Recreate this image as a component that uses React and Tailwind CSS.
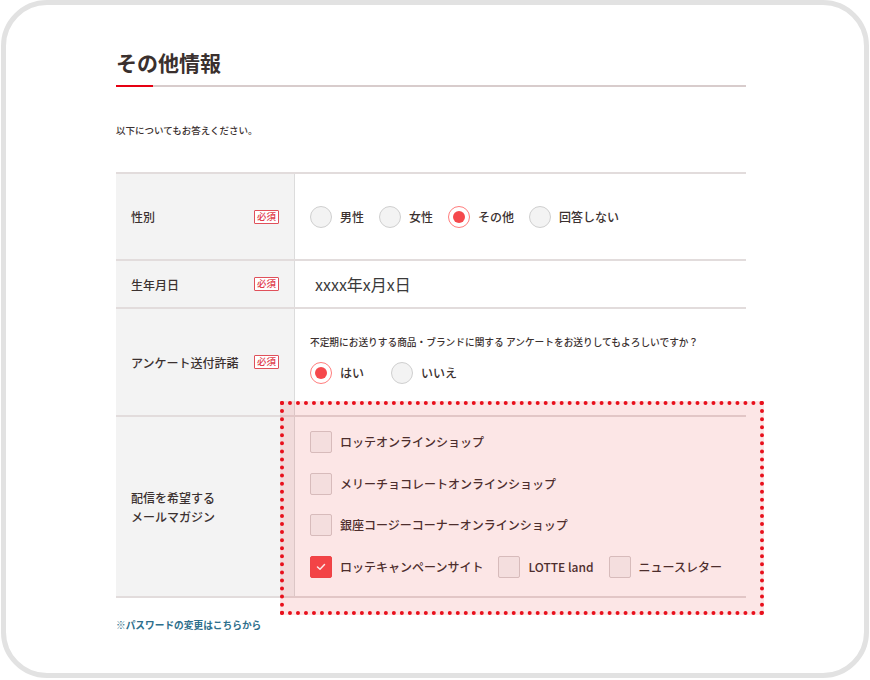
import React from 'react'

const font = { fontFamily: '"Noto Sans CJK JP", "Noto Sans", sans-serif' }

function Badge(){
  return (
    <span className="inline-flex items-center justify-center w-[25px] h-[14px] border border-[#e0505a] bg-white text-[#e03c4c] text-[9.5px] font-medium leading-none rounded-[1px]">必須</span>
  )
}

function Radio({ label, checked }){
  return (
    <div className="flex items-center gap-[8px]">
      {checked ? (
        <span className="w-[22px] h-[22px] rounded-full border border-[#ff7d7d] bg-white flex items-center justify-center">
          <span className="w-[12px] h-[12px] rounded-full bg-[#f5484c]" />
        </span>
      ) : (
        <span className="w-[22px] h-[22px] rounded-full border border-[#cfcfcf] bg-[#f3f3f3]" />
      )}
      <span className="text-[12px] font-medium text-[#3b3130] leading-none">{label}</span>
    </div>
  )
}

function Check({ label, checked }){
  return (
    <div className="flex items-center gap-[8px]">
      {checked ? (
        <span className="w-[22px] h-[22px] rounded-[2px] bg-[#f5484c] border border-[#f0484c] flex items-center justify-center">
          <svg width="10" height="8" viewBox="0 0 10 8" fill="none">
            <polyline points="1.5,4 4,6.3 8.5,1.5" stroke="#fff" strokeWidth="1.5" strokeLinecap="round" strokeLinejoin="round" />
          </svg>
        </span>
      ) : (
        <span className="w-[22px] h-[22px] rounded-[2px] border border-[#d6cfcf] bg-[#f6f6f6]" />
      )}
      <span className="text-[12px] font-medium text-[#3b3130] leading-none">{label}</span>
    </div>
  )
}

function Row({ height, label, required, children }){
  return (
    <div className={`flex border-b-2 border-[#e2dcdc] ${height}`}>
      <div className="w-[179px] shrink-0 bg-[#f3f3f3] border-r border-[#dcdcdc] flex items-center justify-between pl-[15px] pr-[15px]">
        <span className="text-[12px] font-medium text-[#3b3130] leading-[19px]">{label}</span>
        {required && <Badge />}
      </div>
      <div className="flex-1">{children}</div>
    </div>
  )
}

export default function App(){
  return (
    <div className="w-[870px] h-[680px] bg-white" style={font}>
      <div className="ml-[1px] w-[868px] h-[678px] border-[5px] border-[#e2e2e2] rounded-[46px] pl-[110px] pt-[42px]">
        <div className="w-[630px]">
          <h1 className="text-[21px] font-bold leading-[30px] text-[#3a302e]">その他情報</h1>
          <div className="flex mt-[8px] h-[2px]">
            <div className="w-[37px] bg-[#e60012]" />
            <div className="flex-1 bg-[#d8cccc]" />
          </div>
          <p className="mt-[36px] text-[9.5px] leading-[14px] text-[#3b3130] font-medium">以下についてもお答えください。</p>

          <div className="relative mt-[35px] border-t-2 border-[#e2dcdc]">
            <Row height="h-[87px]" label="性別" required>
              <div className="h-full flex items-center pl-[15px] gap-[15px]">
                <Radio label="男性" />
                <Radio label="女性" />
                <Radio label="その他" checked />
                <Radio label="回答しない" />
              </div>
            </Row>
            <Row height="h-[48px]" label="生年月日" required>
              <div className="h-full flex items-center pl-[20px] text-[16px] font-normal text-[#3a3a3a]">xxxx年x月x日</div>
            </Row>
            <Row height="h-[108px]" label="アンケート送付許諾" required>
              <div className="pl-[15px] pt-[26px]">
                <p className="text-[9.7px] leading-[14px] text-[#3b3130] font-medium">不定期にお送りする商品・ブランドに関する アンケートをお送りしてもよろしいですか？</p>
                <div className="flex items-center gap-[27px] mt-[13px]">
                  <Radio label="はい" checked />
                  <Radio label="いいえ" />
                </div>
              </div>
            </Row>
            <Row height="h-[181px]" label={<>配信を希望する<br />メールマガジン</>}>
              <div className="pl-[15px] pt-[14px] flex flex-col gap-[19.5px]">
                <Check label="ロッテオンラインショップ" />
                <Check label="メリーチョコレートオンラインショップ" />
                <Check label="銀座コージーコーナーオンラインショップ" />
                <div className="flex items-center gap-[15px]">
                  <Check label="ロッテキャンペーンサイト" checked />
                  <Check label="LOTTE land" />
                  <Check label="ニュースレター" />
                </div>
              </div>
            </Row>

            <div className="pointer-events-none absolute left-[164px] top-[227px] w-[484px] h-[214px] border-[4px] border-dotted border-[#e8101c] bg-[rgba(230,30,30,0.11)]" />
          </div>

          <p className="mt-[20px] text-[9.7px] leading-[14px] font-bold text-[#2e6f8c]">※パスワードの変更はこちらから</p>
        </div>
      </div>
    </div>
  )
}
